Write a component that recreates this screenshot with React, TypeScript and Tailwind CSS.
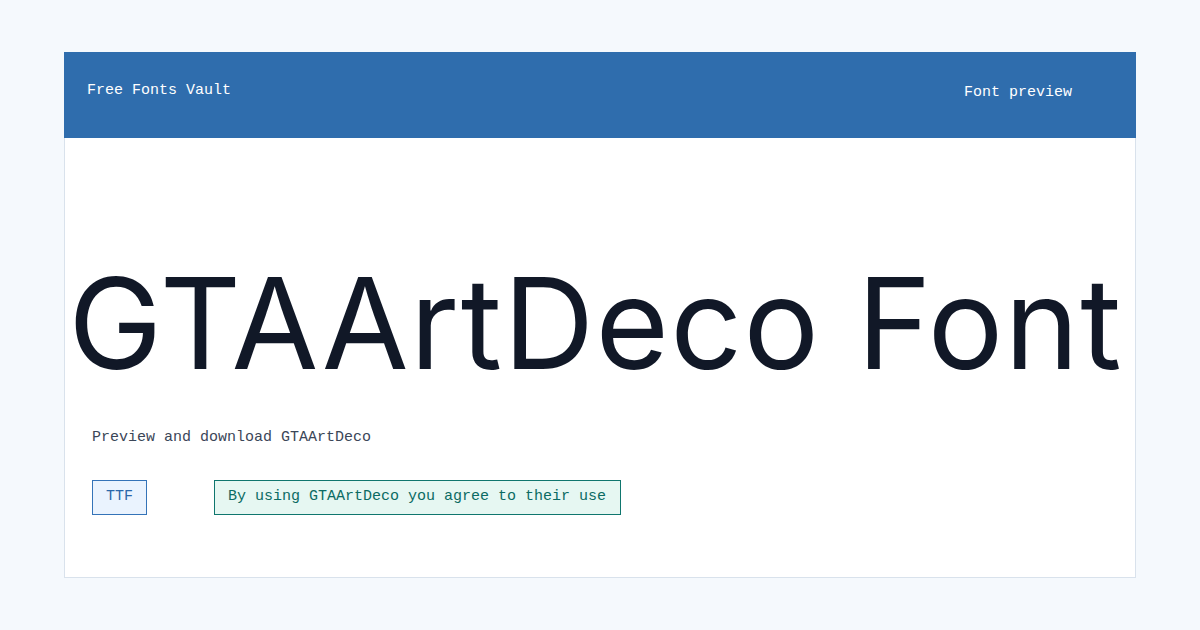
const mono = { fontFamily: '"Liberation Mono", "DejaVu Sans Mono", monospace' };

export default function App() {
  return (
    <div className="min-h-[630px] w-full bg-[#f5f9fd] pt-[52px]" style={mono}>
      <main className="mx-[64px] border border-t-0 border-[#d9e2ec] bg-white">
        <header className="-mx-px flex h-[86px] items-center justify-between bg-[#2f6dad] pl-[23px] pr-[64px] text-[15px] text-white">
          <span className="-mt-[8px]">Free Fonts Vault</span>
          <nav className="-mt-[4px]">
            <span>Font preview</span>
          </nav>
        </header>

        <section className="pb-[62px] pt-[122px]">
          <h1
            className="whitespace-nowrap pr-[9px] text-center text-[126px] leading-[126px] tracking-[1.3px] text-[#111827]"
            style={{ fontFamily: 'Inter, "Noto Sans", sans-serif' }}
          >
            GTAArtDeco Font
          </h1>

          <div className="px-[27px]">
            <p className="mt-[42px] text-[15px] leading-[20px] text-[#3b4658]">Preview and download GTAArtDeco</p>

            <div className="mt-[32px] flex items-center gap-[67px]">
              <span className="flex h-[35px] items-center border border-[#3473b8] bg-[#eaf3fe] px-[13px] text-[15px] text-[#2a67aa]">
                TTF
              </span>
              <span className="flex h-[35px] items-center border border-[#0f766e] bg-[#e6f7f2] pl-[13px] pr-[14px] text-[15px] text-[#0b6b63]">
                By using GTAArtDeco you agree to their use
              </span>
            </div>
          </div>
        </section>
      </main>
    </div>
  );
}
